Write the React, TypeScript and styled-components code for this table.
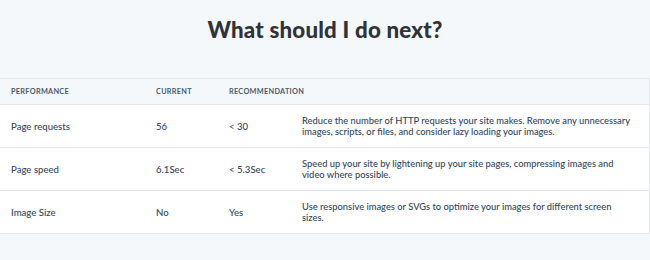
import styled, { createGlobalStyle } from "styled-components";

const GlobalStyle = createGlobalStyle`
  body {
    margin: 0;
    background: #f5f8fa;
    font-family: Lato, "Noto Sans", sans-serif;
    color: #33475b;
  }
`;

const Page = styled.div`
  width: 650px;
  min-height: 260px;
  background: #f5f8fa;
`;

const Title = styled.h2`
  margin: 0;
  height: 78px;
  padding-top: 16px;
  box-sizing: border-box;
  text-align: center;
  font-size: 22.3px;
  font-weight: 900;
  color: #2f3337;
  letter-spacing: 0.2px;
`;

const Table = styled.div`
  border-top: 1px solid #e3e8ee;
  border-right: 1px solid #e3e8ee;
`;

const Row = styled.div<{ $head?: boolean }>`
  display: grid;
  grid-template-columns: 145px 73px 73px 1fr;
  align-items: center;
  height: ${(p) => (p.$head ? "25px" : "42px")};
  background: ${(p) => (p.$head ? "#f5f8fa" : "#ffffff")};
  border-bottom: 1px solid #e3e8ee;
`;

const Cell = styled.div<{ $head?: boolean }>`
  padding-left: 11px;
  font-size: ${(p) => (p.$head ? "7.3px" : "9.6px")};
  font-weight: ${(p) => (p.$head ? 700 : 500)};
  letter-spacing: ${(p) => (p.$head ? "0.3px" : "0")};
  color: ${(p) => (p.$head ? "#4a5a6b" : "#33475b")};
  line-height: 11px;
`;

const Desc = styled(Cell)`
  font-size: 9.35px;
  padding-right: 16px;
`;

const rows = [
  {
    name: "Page requests",
    current: "56",
    rec: "< 30",
    text: "Reduce the number of HTTP requests your site makes. Remove any unnecessary images, scripts, or files, and consider lazy loading your images.",
  },
  {
    name: "Page speed",
    current: "6.1Sec",
    rec: "< 5.3Sec",
    text: "Speed up your site by lightening up your site pages, compressing images and video where possible.",
  },
  {
    name: "Image Size",
    current: "No",
    rec: "Yes",
    text: "Use responsive images or SVGs to optimize your images for different screen sizes.",
  },
];

export default function App() {
  return (
    <Page>
      <GlobalStyle />
      <Title>What should I do next?</Title>
      <Table>
        <Row $head>
          <Cell $head>PERFORMANCE</Cell>
          <Cell $head>CURRENT</Cell>
          <Cell $head>RECOMMENDATION</Cell>
          <Cell $head />
        </Row>
        {rows.map((row) => (
          <Row key={row.name}>
            <Cell>{row.name}</Cell>
            <Cell>{row.current}</Cell>
            <Cell>{row.rec}</Cell>
            <Desc>{row.text}</Desc>
          </Row>
        ))}
      </Table>
    </Page>
  );
}
